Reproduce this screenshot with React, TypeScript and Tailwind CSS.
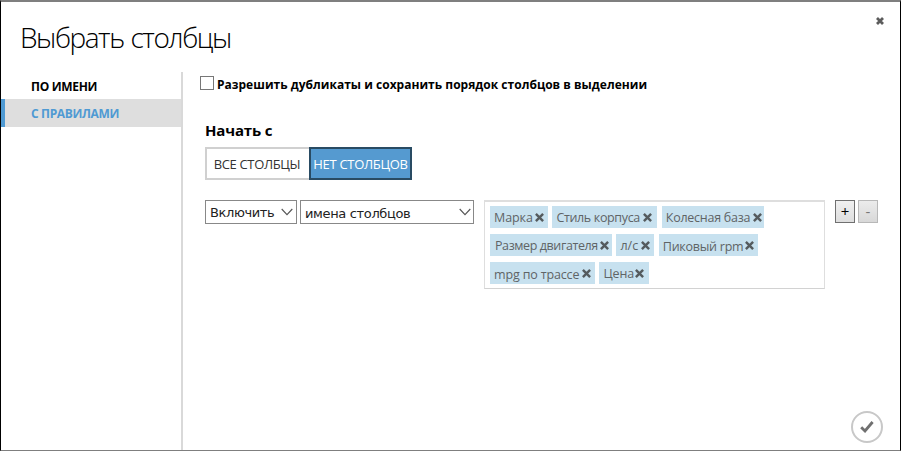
import React from "react";

const UI = "font-['Open_Sans','Noto_Sans',sans-serif]";

function Cross({ className }: { className: string }) {
  return (
    <svg viewBox="0 0 10 10" className={className} fill="none" stroke="currentColor" strokeWidth="2.7">
      <path d="M1 1L9 9M9 1L1 9" />
    </svg>
  );
}

function Chevron() {
  return (
    <svg viewBox="0 0 12 8" className="h-2 w-3 shrink-0" fill="none" stroke="#555" strokeWidth="1.1">
      <path d="M0.7 1L6 6.6L11.3 1" />
    </svg>
  );
}

type TagProps = { text: string; box: string; label: string };

function Tag({ text, box, label }: TagProps) {
  return (
    <div className={`flex h-[22px] items-center bg-[#c7e1ef] text-[#5f6466] ${box}`}>
      <span className={`whitespace-nowrap text-[12.5px] leading-[22px] ${label}`}>{text}</span>
      <Cross className="ml-auto h-[9px] w-[9px] shrink-0 text-[#555b5e]" />
    </div>
  );
}

const rows: TagProps[][] = [
  [
    { text: "Марка", box: "w-[58px] pl-[4px] pr-[4px]", label: "pt-[2px] tracking-[-0.1px]" },
    { text: "Стиль корпуса", box: "w-[105px] pl-[4px] pr-[5px]", label: "pt-[2px] tracking-[-0.35px]" },
    { text: "Колесная база", box: "w-[102px] pl-[4px] pr-[2px]", label: "pt-[2px] tracking-[-0.25px]" },
  ],
  [
    { text: "Размер двигателя", box: "w-[122px] pl-[5px] pr-[3px]", label: "pt-[2px] tracking-[-0.4px]" },
    { text: "л/с", box: "w-[38px] pl-[4px] pr-[4px]", label: "pt-[2px]" },
    { text: "Пиковый rpm", box: "w-[99px] pl-[4px] pr-[4px]", label: "pt-[3px] tracking-[-0.25px]" },
  ],
  [
    { text: "mpg по трассе", box: "w-[105px] pl-[4px] pr-[4px]", label: "pt-[3px] tracking-[-0.15px]" },
    { text: "Цена", box: "w-[50px] pl-[4px] pr-[5px]", label: "pt-[2px] tracking-[-0.1px]" },
  ],
];

export default function App() {
  return (
    <div
      className={`flex h-[451px] w-[901px] flex-col overflow-hidden border-x border-b border-t-2 border-x-black border-b-[#7f7f7f] border-t-[#7f7f7f] bg-white text-black ${UI}`}
    >
      <header className="flex h-[70px] shrink-0 items-start justify-between pl-[19px] pr-4">
        <h1 className="mt-[14px] whitespace-nowrap text-[28px] font-light leading-[42px] tracking-[-1.45px] [word-spacing:1px]">Выбрать столбцы</h1>
        <svg viewBox="0 0 8 8" className="mt-[15px] h-2 w-2" fill="none" stroke="#5c5c5c" strokeWidth="2.8">
          <path d="M1 1L7 7M7 1L1 7" />
        </svg>
      </header>
      <div className="flex flex-1">
        <nav className="w-[182px] shrink-0 border-r-2 border-[#d9d9d9] text-[12px] font-bold">
          <div className="h-[27px] whitespace-nowrap pl-[30px] leading-[29px] tracking-[-0.3px]">ПО ИМЕНИ</div>
          <div className="h-[28px] whitespace-nowrap border-l-4 border-[#4f9ad3] bg-[#dedede] pl-[26px] leading-[29px] tracking-[-0.35px] text-[#4f9ad3]">
            С ПРАВИЛАМИ
          </div>
        </nav>
        <main className="flex flex-1 flex-col pl-[17px]">
          <label className="mt-[3px] flex h-[16px] items-center">
            <span className="h-[14px] w-[14px] border border-[#777]" />
            <span className="ml-[3px] mt-[3px] whitespace-nowrap text-[12px] font-bold leading-4 tracking-[0.02px]">
              Разрешить дубликаты и сохранить порядок столбцов в выделении
            </span>
          </label>
          <h2 className="ml-[5px] mt-[29px] h-[20px] whitespace-nowrap text-[15px] font-bold leading-5 tracking-[-0.15px]">Начать с</h2>
          <div className="ml-[5px] mt-[7px] flex h-[33px] text-[13px] leading-[31px]">
            <div className="w-[104px] whitespace-nowrap border-2 border-r-0 border-[#d0d0d0] pr-[2px] text-center tracking-[-0.35px] text-[#333]">ВСЕ СТОЛБЦЫ</div>
            <div className="w-[103px] whitespace-nowrap border-2 border-[#294b63] bg-[#559ad0] text-center tracking-[-0.3px] text-white">НЕТ СТОЛБЦОВ</div>
          </div>
          <div className="ml-[5px] mt-[20px] flex items-start text-[#222]">
            <div className="flex h-6 w-[92px] items-center justify-between border border-[#888] pl-[4px] pr-[3px] font-['DejaVu_Sans',sans-serif] text-[13px]">
              <span className="whitespace-nowrap pt-px tracking-[-0.4px]">Включить</span>
              <Chevron />
            </div>
            <div className="ml-[3px] flex h-6 w-[174px] items-center justify-between border border-[#888] pl-1 pr-[2px] font-['DejaVu_Sans',sans-serif] text-[13px]">
              <span className="whitespace-nowrap pt-[3px] tracking-[-0.35px]">имена столбцов</span>
              <Chevron />
            </div>
            <div className="ml-[10px] flex h-[89px] w-[341px] flex-col gap-[6px] border border-t-2 border-[#dedede] border-b-[#d2d2d2] pl-[5px] pt-1">
              {rows.map((row, i) => (
                <div key={i} className="flex gap-[4.4px]">
                  {row.map((tag) => (
                    <Tag key={tag.text} {...tag} />
                  ))}
                </div>
              ))}
            </div>
            <div className="ml-[10px] flex h-[23px] w-[20px] items-center justify-center border border-[#707070] bg-linear-to-b from-[#f0f0f0] to-[#dedede] text-[15px] text-black">
              +
            </div>
            <div className="ml-[3px] flex h-[23px] w-[20px] items-center justify-center border border-[#b8b8b8] bg-linear-to-b from-[#ececec] to-[#d8d8d8] text-[15px] text-[#777]">
              -
            </div>
          </div>
          <div className="mb-[7px] mr-[17px] mt-auto flex h-[32px] w-[32px] items-center justify-center self-end rounded-full border-2 border-[#c8c8c8]">
            <svg viewBox="0 0 14 12" className="h-3 w-[14px]" fill="none" stroke="#707070" strokeWidth="2.8">
              <path d="M1.2 6.2L5 10L12.6 1" />
            </svg>
          </div>
        </main>
      </div>
    </div>
  );
}
